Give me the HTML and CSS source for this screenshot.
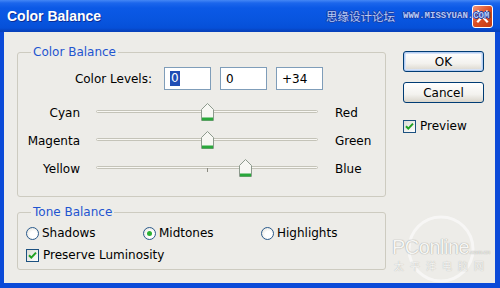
FILE: index.html
```html
<!DOCTYPE html>
<html>
<head>
<meta charset="utf-8">
<link rel="stylesheet" href="styles.css">
</head>
<body>
<div class="window">
  <div class="titlebar">
    <span class="title">Color Balance</span>
    <span class="close">
      <svg width="19" height="21" viewBox="0 0 19 21"><path d="M5 5.5 L14 15.5 M14 5.5 L5 15.5" stroke="#fff" stroke-width="2.2" stroke-linecap="square"/></svg>
    </span>
    <span class="wm"><span class="wm-cn">思缘设计论坛</span><span class="wm-en">WWW.MISSYUAN.COM</span></span>
  </div>
  <div class="frame">
    <div class="groups">
      <fieldset class="group balance">
        <legend>Color Balance</legend>
        <div class="levels">
          <span class="levels-label">Color Levels:</span>
          <span class="field"><span class="sel">0</span></span>
          <span class="field">0</span>
          <span class="field">+34</span>
        </div>
        <div class="slider-row">
          <span class="lbl-l">Cyan</span>
          <div class="track"><div class="rail"></div>
            <svg class="thumb" style="--v:50%" width="13" height="18" viewBox="0 0 13 18"><path d="M0.5 6.5 L6.5 0.5 L12.5 6.5 V17.5 H0.5 Z" fill="#f7f7f3" stroke="#8d9a8d"/><rect x="1" y="14.5" width="11" height="3" fill="#29a83b"/></svg>
          </div>
          <span class="lbl-r">Red</span>
        </div>
        <div class="slider-row">
          <span class="lbl-l">Magenta</span>
          <div class="track"><div class="rail"></div>
            <svg class="thumb" style="--v:50%" width="13" height="18" viewBox="0 0 13 18"><path d="M0.5 6.5 L6.5 0.5 L12.5 6.5 V17.5 H0.5 Z" fill="#f7f7f3" stroke="#8d9a8d"/><rect x="1" y="14.5" width="11" height="3" fill="#29a83b"/></svg>
          </div>
          <span class="lbl-r">Green</span>
        </div>
        <div class="slider-row">
          <span class="lbl-l">Yellow</span>
          <div class="track"><div class="rail ticked"></div>
            <svg class="thumb" style="--v:67%" width="13" height="18" viewBox="0 0 13 18"><path d="M0.5 6.5 L6.5 0.5 L12.5 6.5 V17.5 H0.5 Z" fill="#f7f7f3" stroke="#8d9a8d"/><rect x="1" y="14.5" width="11" height="3" fill="#29a83b"/></svg>
          </div>
          <span class="lbl-r">Blue</span>
        </div>
      </fieldset>
      <fieldset class="group tone">
        <legend>Tone Balance</legend>
        <div class="radios">
          <span class="opt"><span class="radio"></span>Shadows</span>
          <span class="opt"><span class="radio on"></span>Midtones</span>
          <span class="opt"><span class="radio"></span>Highlights</span>
        </div>
        <div class="opt lum">
          <span class="check"><svg width="11" height="11" viewBox="0 0 11 11"><path d="M2 5.2 L4.3 7.6 L9 2.6" fill="none" stroke="#21a121" stroke-width="2"/></svg></span>Preserve Luminosity
        </div>
      </fieldset>
    </div>
    <div class="actions">
      <div class="btn default">OK</div>
      <div class="btn">Cancel</div>
      <div class="opt preview">
        <span class="check"><svg width="11" height="11" viewBox="0 0 11 11"><path d="M2 5.2 L4.3 7.6 L9 2.6" fill="none" stroke="#21a121" stroke-width="2"/></svg></span>Preview
      </div>
    </div>
  </div>
  <div class="pc-wm">
    <svg class="pc-ring" width="70" height="70" viewBox="0 0 70 70"><circle cx="35" cy="35" r="32" fill="none" stroke="#ffffff" stroke-width="3" opacity="0.8"/></svg>
    <div class="pc-logo">PConline<span class="pc-small">.com.cn</span></div>
    <div class="pc-cn">太平洋电脑网</div>
  </div>
</div>
</body>
</html>
```
FILE: styles.css
```css
* { box-sizing: border-box; }
html, body { margin: 0; padding: 0; }
body {
  width: 500px;
  height: 288px;
  overflow: hidden;
  font-family: "DejaVu Sans", sans-serif;
  font-size: 12px;
  color: #000;
  background: #edece8;
}
.window {
  position: relative;
  width: 500px;
  height: 288px;
  display: flex;
  flex-direction: column;
}
.titlebar {
  position: relative;
  flex: none;
  height: 32px;
  display: flex;
  align-items: center;
  padding: 0 7px 0 7px;
  background: linear-gradient(#4487f5 0px, #1c66ec 3px, #0b59e6 8px, #0855df 20px, #0650d8 28px, #0741bc 31px);
}
.title {
  flex: 1;
  font-family: "Liberation Sans", Arial, sans-serif;
  font-weight: bold;
  font-size: 14px;
  color: #fff;
  text-shadow: 1px 1px 0 #0a2e96;
}
.close {
  width: 21px;
  height: 23px;
  border: 1px solid #fff;
  border-radius: 3px;
  background: linear-gradient(135deg, #f3977a, #dc4d22 50%, #c13b12);
  display: flex;
}
.wm {
  position: absolute;
  left: 326px;
  top: 9px;
  display: flex;
  align-items: center;
  gap: 8px;
  pointer-events: none;
}
.wm-cn {
  font-family: "Noto Sans CJK SC", sans-serif;
  font-size: 11.5px;
  line-height: 14px;
  color: #b7caf4;
  text-shadow: 1px 0 0 #1b3ea6, -1px 0 0 #1b3ea6, 0 1px 0 #1b3ea6, 0 -1px 0 #1b3ea6;
}
.wm-en {
  font-family: "Liberation Mono", monospace;
  font-weight: bold;
  font-size: 9px;
  color: #b7caf4;
  text-shadow: 1px 0 0 #1b3ea6, -1px 0 0 #1b3ea6, 0 1px 0 #1b3ea6, 0 -1px 0 #1b3ea6;
}
.frame {
  flex: 1;
  display: flex;
  gap: 17px;
  padding: 12px 0 0 13px;
  border-left: 4px solid #0b4ad8;
  border-right: 5px solid #0b4ad8;
  border-bottom: 5px solid #0b4ad8;
  background: #edece8;
}
.groups {
  width: 369px;
  display: flex;
  flex-direction: column;
}
.group {
  margin: 0;
  padding: 0 0 13px 0;
  border: 1px solid #cdcbc0;
  border-radius: 3px;
  min-width: 0;
}
.group legend {
  margin-left: 13px;
  padding: 0 2px;
  color: #1f55d0;
  font-size: 12px;
  line-height: 16px;
}
.levels {
  display: flex;
  align-items: center;
  gap: 9px;
  margin-top: 7px;
}
.levels-label {
  width: 134px;
  text-align: right;
  margin-right: 3px;
}
.field {
  width: 47px;
  height: 23px;
  border: 1px solid #7f9db9;
  background: #fff;
  padding-left: 5px;
  display: flex;
  align-items: center;
}
.sel {
  background: #1f4db5;
  color: #fff;
  padding: 0 1px;
  line-height: 15px;
}
.levels + .slider-row { margin-top: 9px; }
.slider-row {
  display: flex;
  align-items: center;
  height: 28px;
}
.lbl-l {
  width: 62px;
  text-align: right;
}
.lbl-r { flex: none; }
.track {
  position: relative;
  width: 222px;
  height: 28px;
  margin: 0 17px 0 16px;
  padding-top: 11px;
}
.rail {
  position: relative;
  height: 3px;
  border: 1px solid #c4c3b8;
  border-radius: 2px;
  background: #f8f7f3;
}
.rail.ticked::after {
  content: "";
  position: absolute;
  left: 110px;
  top: 1px;
  width: 1px;
  height: 4px;
  background: #8a8a80;
}
.thumb {
  position: absolute;
  top: 4px;
  left: calc(var(--v) - 6px);
}
.tone {
  margin-top: 7px;
  padding-bottom: 5px;
}
.radios {
  display: grid;
  grid-template-columns: 117px 118px auto;
  margin-top: 4px;
  padding-left: 8px;
  height: 18px;
  align-items: center;
}
.opt {
  display: flex;
  align-items: center;
  gap: 3px;
}
.radio {
  flex: none;
  width: 13px;
  height: 13px;
  border-radius: 50%;
  border: 1px solid #2a5a8c;
  background: radial-gradient(circle at 60% 60%, #fff 35%, #dedcd3);
  display: flex;
  align-items: center;
  justify-content: center;
}
.radio.on::after {
  content: "";
  width: 5px;
  height: 5px;
  border-radius: 50%;
  background: #2cb035;
}
.lum {
  margin-top: 4px;
  padding-left: 8px;
  height: 18px;
  gap: 4px;
}
.check {
  flex: none;
  width: 13px;
  height: 13px;
  border: 1px solid #1c5180;
  background: linear-gradient(135deg, #dcdcd5, #fff);
  display: flex;
  align-items: center;
  justify-content: center;
}
.actions {
  display: flex;
  flex-direction: column;
  padding-top: 7px;
}
.btn {
  width: 81px;
  height: 21px;
  border: 1px solid #003c74;
  border-radius: 3px;
  background: linear-gradient(#ffffff, #f3f2ee 60%, #d9d5cb);
  display: flex;
  align-items: center;
  justify-content: center;
}
.btn + .btn { margin-top: 10px; }
.btn.default {
  box-shadow: inset 0 0 0 1px #b2ccf2, inset 0 0 0 2px #d6e2f6;
}
.preview {
  margin-top: 16px;
  gap: 4px;
}
.pc-wm {
  position: absolute;
  left: 388px;
  top: 212px;
  width: 105px;
  height: 70px;
  pointer-events: none;
}
.pc-ring {
  position: absolute;
  left: 18px;
  top: 2px;
  opacity: 0.7;
}
.pc-logo {
  position: absolute;
  left: 4px;
  top: 24px;
  font-family: "Liberation Sans", Arial, sans-serif;
  font-size: 20px;
  letter-spacing: -0.5px;
  color: #f6f6f4;
  text-shadow: 0 0 1px #a9a9a4, 0 0 1px #a9a9a4;
}
.pc-small {
  font-size: 6px;
  letter-spacing: 0;
}
.pc-cn {
  position: absolute;
  left: 6px;
  top: 46px;
  font-family: "Noto Sans CJK SC", sans-serif;
  font-size: 10px;
  letter-spacing: 6px;
  color: #f4f4f2;
  text-shadow: 0 0 1px #a9a9a4;
}
```
